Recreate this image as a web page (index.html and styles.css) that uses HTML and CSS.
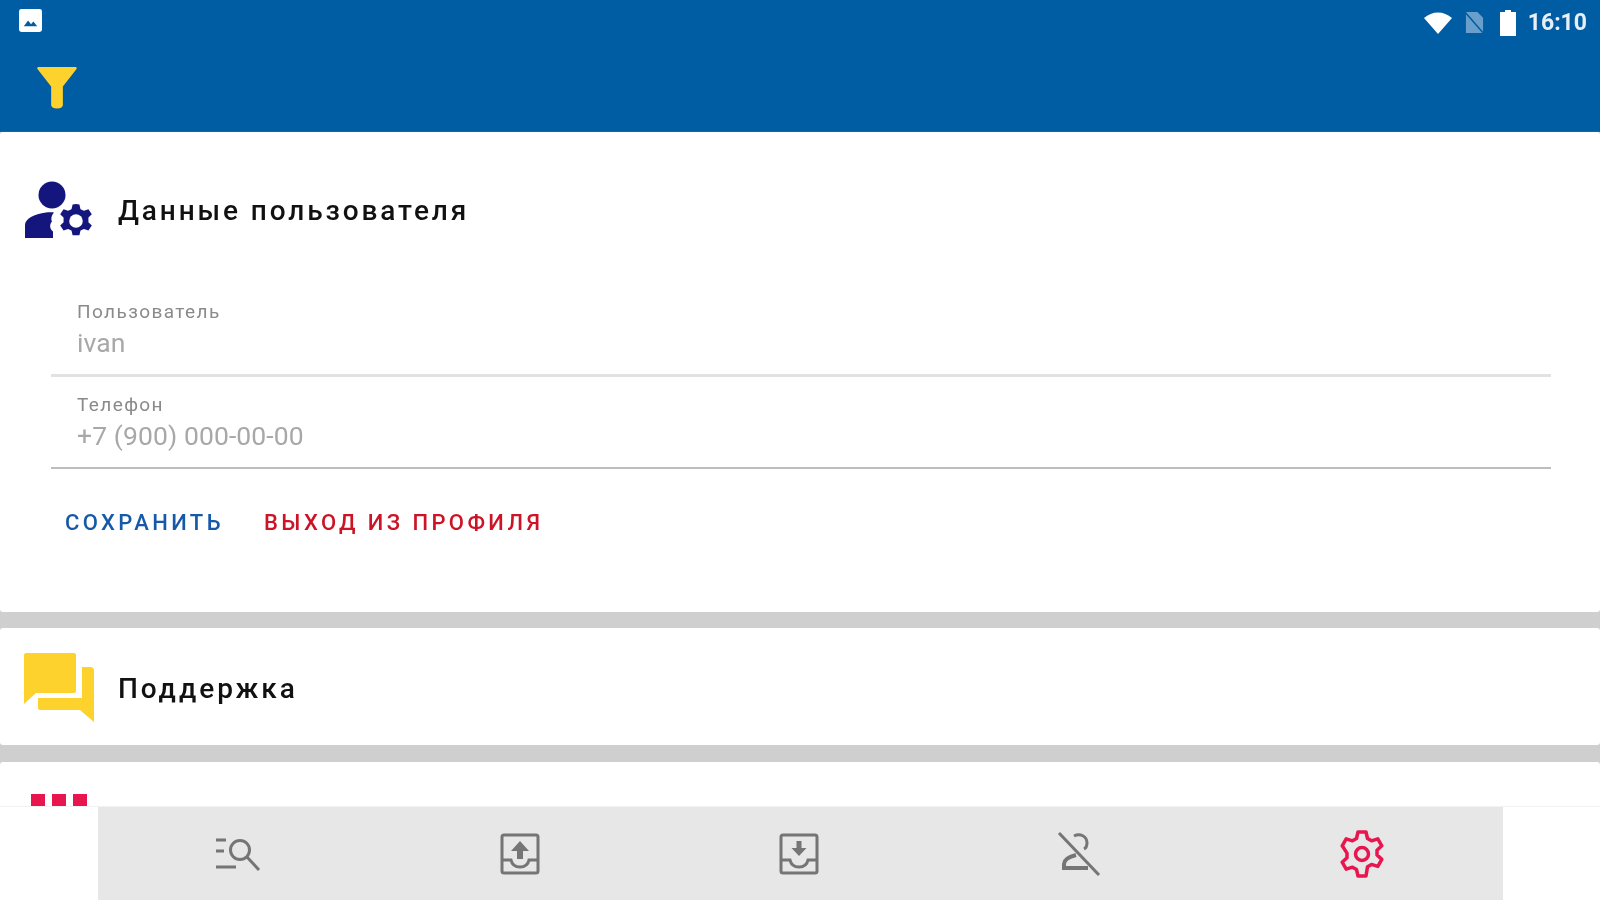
FILE: index.html
```html
<!DOCTYPE html>
<html lang="ru">
<head>
  <meta charset="UTF-8">
  <title>Настройки</title>
  <link rel="stylesheet" href="styles.css">
</head>
<body>
  <div class="app">
    <!-- Шапка -->
    <header class="top">
      <div class="status-bar">
        <svg class="status-pic" viewBox="0 0 24 24"><rect x="0" y="0" width="24" height="24" rx="2.5" fill="#fff"/><path d="M5 18l4.500-6 3 4 2.500-3 4 5z" fill="#005da3"/></svg>
        <div class="status-right">
          <svg class="ic-wifi" viewBox="0 0 30 24"><path d="M15 23L1 7c8-7.500 20-7.500 28 0z" fill="#fff"/></svg>
          <svg class="ic-sim" viewBox="0 0 20 24"><path d="M1 1h12l6 6v16H1z" fill="#6b9fcb"/><path d="M0 1l20 23" stroke="#005da3" stroke-width="1.500"/></svg>
          <svg class="ic-batt" viewBox="0 0 18 26"><path d="M6 0h6v2h5v24H1V2h5z" fill="#fff"/></svg>
          <span class="status-time">16:10</span>
        </div>
      </div>
      <div class="toolbar">
        <svg class="ic-filter" viewBox="0 0 42 44"><path d="M2 1h38c1 0 1.500 1 1 2L27 21v19c0 2-2 3.500-6 3.500s-6-1.500-6-3.500V21L1 3c-.5-1 0-2 1-2z" fill="#fdd22c"/></svg>
      </div>
    </header>

    <main class="content">
      <section class="card card-user">
        <div class="card-head">
          <svg class="card-icon" viewBox="0 -2 70 60">
            <circle cx="28" cy="13" r="13.500" fill="#14167e"/>
            <path d="M1 56V43c0-6 9-11 21-12.500 4-.5 8 0 8 0-3 3-3 7-2 9-3 3-2 8 1 10 0 2 0 6.500 0 6.500z" fill="#14167e"/>
            <g transform="translate(52 39) scale(1.130) translate(-52 -39)">
              <path d="M52 24l3 .5 1 4 3 1.500 4-1.500 3 4.500-3 3v4l3 3-3 4.500-4-1.500-3 1.500-1 4h-6l-1-4-3-1.500-4 1.500-3-4.500 3-3v-4l-3-3 3-4.500 4 1.500 3-1.500 1-4z" fill="#14167e"/>
              <circle cx="52" cy="39" r="6" fill="#fff"/>
            </g>
          </svg>
          <h2 class="card-title">Данные пользователя</h2>
        </div>
        <div class="field field-first">
          <div class="field-label">Пользователь</div>
          <div class="field-value">ivan</div>
        </div>
        <div class="field field-second">
          <div class="field-label">Телефон</div>
          <div class="field-value">+7 (900) 000-00-00</div>
        </div>
        <div class="actions">
          <button class="btn btn-save">СОХРАНИТЬ</button>
          <button class="btn btn-exit">ВЫХОД ИЗ ПРОФИЛЯ</button>
        </div>
      </section>

      <section class="card card-support">
        <svg class="card-icon" viewBox="0 0 70 70">
          <path d="M2 0h48c1 0 2 1 2 2v36c0 1-1 2-2 2H12L0 51V2C0 1 1 0 2 0z" fill="#fdd22c"/>
          <path d="M14 45h44V14h8c2 0 4 1 4 3v52L56 57H16c-1 0-2-1-2-2z" fill="#fdd22c"/>
        </svg>
        <h2 class="card-title">Поддержка</h2>
      </section>

      <section class="card card-more">
        <div class="dots"><span></span><span></span><span></span></div>
      </section>
    </main>

    <!-- Нижнее меню -->
    <nav class="bottom">
      <div class="bottom-inner">
        <a class="tab">
          <svg viewBox="0 0 46 34" class="ic-search"><g fill="none" stroke="#757575" stroke-width="3"><path d="M1 3h10M1 14h8M1 30h20"/><circle cx="25" cy="13" r="9.500"/><path d="M32 20l12 13"/></g></svg>
        </a>
        <a class="tab">
          <svg viewBox="0 0 40 42" class="ic-tray"><g fill="none" stroke="#757575" stroke-width="3"><rect x="2" y="2" width="36" height="38" rx="2"/><path d="M2 27h9c1 5 4 7 9 7s8-2 9-7h9"/></g><path d="M20 8l9 10h-6v8h-6v-8h-6z" fill="#757575"/></svg>
        </a>
        <a class="tab">
          <svg viewBox="0 0 40 42" class="ic-tray"><g fill="none" stroke="#757575" stroke-width="3"><rect x="2" y="2" width="36" height="38" rx="2"/><path d="M2 27h9c1 5 4 7 9 7s8-2 9-7h9"/></g><path d="M17.500 8h5v7h5l-7.500 8-7.500-8h5z" fill="#757575"/></svg>
        </a>
        <a class="tab">
          <svg viewBox="0 0 44 44" class="ic-noperson"><g fill="none" stroke="#757575" stroke-width="3"><path d="M17 4c6-3 13 0 13 7 0 3-1 5-3 6"/><path d="M19 23c-8 2-12 5-12 9v4h24" stroke-width="4"/><path d="M2 1l40 42"/></g></svg>
        </a>
        <a class="tab">
          <svg viewBox="0 0 44 48" class="ic-gear"><g fill="none" stroke="#e8164f" stroke-width="3.500" stroke-linejoin="round"><path d="M18 2h8l1.500 6.500 4 2.300 6.300-2 4 7-4.800 4.500v4.600l4.800 4.500-4 7-6.300-2-4 2.300L26 46h-8l-1.500-6.500-4-2.300-6.300 2-4-7 4.800-4.500v-4.600L2.200 15.800l4-7 6.300 2 4-2.300z"/><circle cx="22" cy="24" r="6.500"/></g></svg>
        </a>
      </div>
    </nav>
  </div>
</body>
</html>
```

FILE: styles.css
```css
html, body {
  margin: 0;
  height: 100%;
}
body {
  background: #fff;
  font-family: Roboto, 'Liberation Sans', sans-serif;
  overflow: hidden;
}
.app {
  height: 900px;
  display: flex;
  flex-direction: column;
  filter: blur(0.7px);
}
.top {
  height: 132px;
  flex-shrink: 0;
  background: #005da3;
  border-bottom: 1px solid #1d5fa8;
  box-sizing: border-box;
}
.status-bar {
  height: 42px;
  padding: 9px 13px 0 19px;
  box-sizing: border-box;
  display: flex;
  justify-content: space-between;
  align-items: flex-start;
}
.status-pic {
  width: 23px;
  height: 23px;
}
.status-right {
  display: flex;
  align-items: center;
}
.ic-wifi {
  width: 30px;
  height: 24px;
  margin-right: 12px;
}
.ic-sim {
  width: 19px;
  height: 23px;
  margin-right: 15px;
}
.ic-batt {
  width: 18px;
  height: 26px;
  margin-right: 11px;
}
.status-time {
  color: #e8eff6;
  font-size: 23px;
  font-weight: 700;
}
.toolbar {
  padding: 24px 0 0 36px;
}
.ic-filter {
  display: block;
  width: 42px;
  height: 43px;
}
.content {
  flex: 1;
  overflow: hidden;
  background: #cfcfcf;
  display: flex;
  flex-direction: column;
  gap: 16px;
}
.card {
  background: #fff;
  flex-shrink: 0;
  border-radius: 3px;
}
.card-user {
  height: 480px;
  padding: 48px 49px 0 24px;
  box-sizing: border-box;
}
.card-head {
  display: flex;
  align-items: center;
  gap: 24px;
  margin-bottom: 60px;
}
.card-icon {
  width: 70px;
  flex-shrink: 0;
}
.card-head .card-icon {
  height: 60px;
}
.card-title {
  margin: 0;
  font-size: 28px;
  font-weight: 500;
  letter-spacing: 2.900px;
  color: #111;
}
.field {
  margin-left: 27px;
  padding-left: 26px;
}
.field-label {
  color: #8a8a8a;
  font-size: 19px;
  letter-spacing: 1.400px;
  line-height: 24px;
}
.field-value {
  color: #a8a8a8;
  font-size: 26.500px;
  letter-spacing: 0.100px;
  line-height: 38px;
}
.field-first {
  border-bottom: 3px solid #e2e2e2;
  padding-bottom: 12px;
}
.field-second {
  margin-top: 16px;
  border-bottom: 2px solid #bdbdbd;
  padding-bottom: 12px;
}
.actions {
  margin: 41px 0 0 41px;
  display: flex;
  gap: 40px;
}
.btn {
  background: none;
  border: none;
  padding: 0;
  font-family: inherit;
  font-size: 22px;
  font-weight: 500;
  letter-spacing: 3.400px;
}
.btn-save {
  color: #1659a8;
}
.btn-exit {
  color: #cc1426;
}
.card-support {
  height: 117px;
  padding: 25px 0 0 24px;
  box-sizing: border-box;
  display: flex;
  align-items: flex-start;
  gap: 24px;
}
.card-support .card-icon {
  height: 70px;
}
.card-support .card-title {
  padding-top: 19px;
}
.card-more {
  flex: 1;
  margin-top: 1px;
  padding: 32px 0 0 31px;
}
.dots {
  display: flex;
  gap: 7px;
}
.dots span {
  width: 14px;
  height: 14px;
  background: #e8164f;
}
.bottom {
  height: 94px;
  flex-shrink: 0;
  background: #fff;
  border-top: 1px solid #f2f2f2;
  padding: 0 97px 0 98px;
  box-sizing: border-box;
}
.bottom-inner {
  height: 100%;
  background: #e8e7e7;
  display: flex;
  justify-content: space-between;
  align-items: center;
  padding: 0 119px 0 117px;
}
.tab {
  display: flex;
  align-items: center;
  justify-content: center;
}
.ic-search {
  width: 46px;
  height: 34px;
}
.ic-tray {
  width: 40px;
  height: 42px;
}
.ic-noperson {
  width: 44px;
  height: 44px;
}
.ic-gear {
  width: 44px;
  height: 48px;
}
```
